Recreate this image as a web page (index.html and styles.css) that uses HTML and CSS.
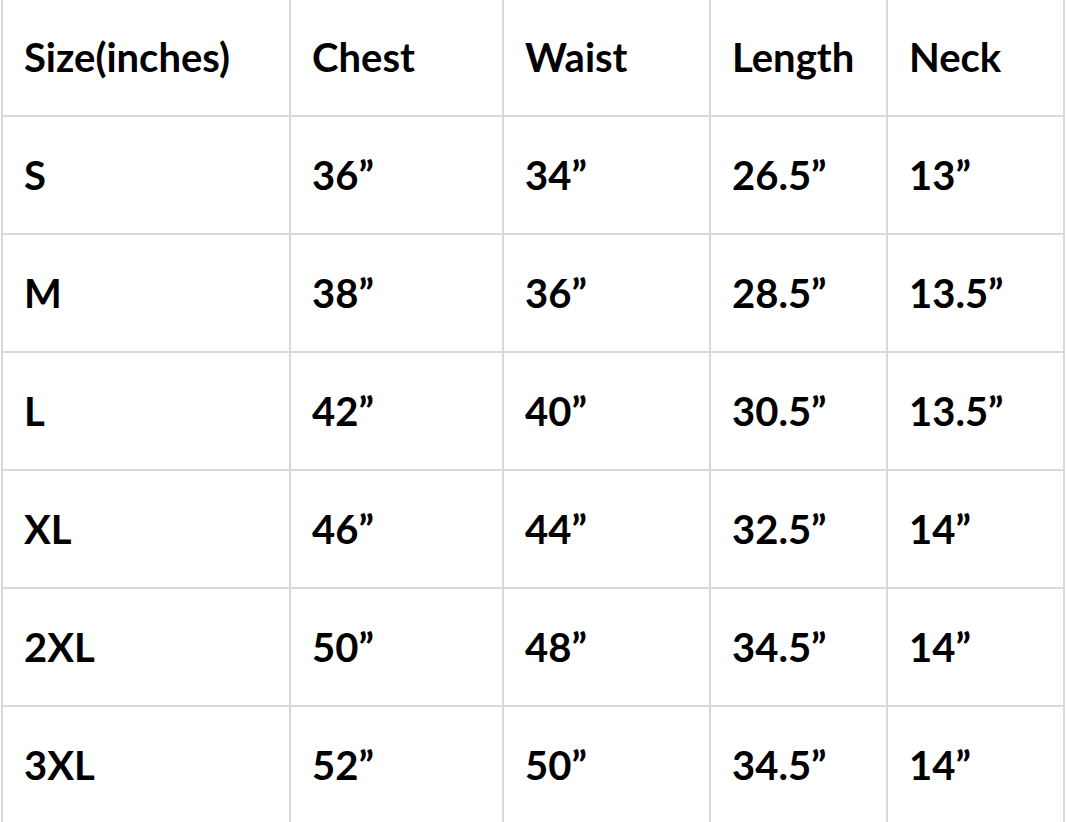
FILE: index.html
```html
<!DOCTYPE html>
<html>
<head>
<meta charset="utf-8">
<link rel="stylesheet" href="styles.css">
</head>
<body>
<div class="chart">
  <div class="cell head">Size(inches)</div>
  <div class="cell head">Chest</div>
  <div class="cell head">Waist</div>
  <div class="cell head">Length</div>
  <div class="cell head">Neck</div>

  <div class="cell">S</div>
  <div class="cell">36”</div>
  <div class="cell">34”</div>
  <div class="cell">26.5”</div>
  <div class="cell">13”</div>

  <div class="cell">M</div>
  <div class="cell">38”</div>
  <div class="cell">36”</div>
  <div class="cell">28.5”</div>
  <div class="cell">13.5”</div>

  <div class="cell">L</div>
  <div class="cell">42”</div>
  <div class="cell">40”</div>
  <div class="cell">30.5”</div>
  <div class="cell">13.5”</div>

  <div class="cell">XL</div>
  <div class="cell">46”</div>
  <div class="cell">44”</div>
  <div class="cell">32.5”</div>
  <div class="cell">14”</div>

  <div class="cell">2XL</div>
  <div class="cell">50”</div>
  <div class="cell">48”</div>
  <div class="cell">34.5”</div>
  <div class="cell">14”</div>

  <div class="cell">3XL</div>
  <div class="cell">52”</div>
  <div class="cell">50”</div>
  <div class="cell">34.5”</div>
  <div class="cell">14”</div>
</div>
</body>
</html>
```
FILE: styles.css
```css
html, body {
  margin: 0;
  padding: 0;
  background: #ffffff;
  overflow: hidden;
}
.chart {
  display: grid;
  grid-template-columns: 288px 213px 207px 177px 177px;
  grid-template-rows: 117px repeat(6, 118px);
  margin-left: 1px;
  border-left: 2px solid #d9d9d9;
  width: max-content;
  font-family: "Lato", "Open Sans", sans-serif;
  font-weight: 700;
  font-size: 40px;
  color: #000000;
}
.cell {
  box-sizing: border-box;
  border-right: 2px solid #d9d9d9;
  border-bottom: 2px solid #d9d9d9;
  display: flex;
  align-items: center;
  padding-left: 21px;
  white-space: nowrap;
}
.head {
  padding-bottom: 2px;
}
```
